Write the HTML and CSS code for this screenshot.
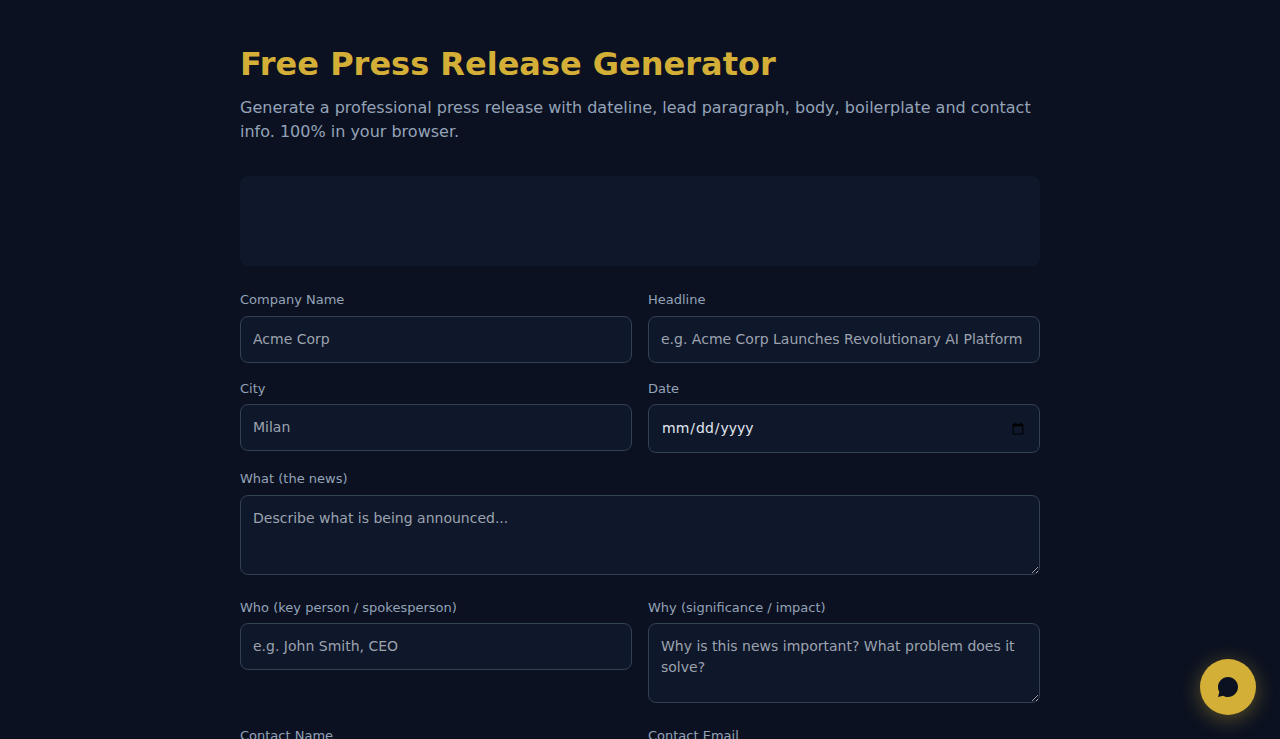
FILE: index.html
```html
<!DOCTYPE html>
<html lang="en">
<head>
<meta charset="utf-8">
<meta name="viewport" content="width=device-width, initial-scale=1">
<title>Free Press Release Generator</title>
<link rel="stylesheet" href="styles.css">
</head>
<body>
<main class="container">
  <h1 class="title">Free Press Release Generator</h1>
  <p class="subtitle">Generate a professional press release with dateline, lead paragraph, body, boilerplate and contact info. 100% in your browser.</p>
  <div class="banner"></div>
  <form class="form">
    <div class="row">
      <div class="field"><label for="company">Company Name</label><input type="text" id="company" placeholder="Acme Corp"></div>
      <div class="field"><label for="headline">Headline</label><input type="text" id="headline" placeholder="e.g. Acme Corp Launches Revolutionary AI Platform"></div>
    </div>
    <div class="row">
      <div class="field"><label for="city">City</label><input type="text" id="city" placeholder="Milan"></div>
      <div class="field"><label for="date">Date</label><input type="date" id="date"></div>
    </div>
    <div class="field"><label for="what">What (the news)</label><textarea id="what" placeholder="Describe what is being announced..."></textarea></div>
    <div class="row">
      <div class="field"><label for="who">Who (key person / spokesperson)</label><input type="text" id="who" placeholder="e.g. John Smith, CEO"></div>
      <div class="field"><label for="why">Why (significance / impact)</label><textarea id="why" placeholder="Why is this news important? What problem does it solve?"></textarea></div>
    </div>
    <div class="row">
      <div class="field"><label for="contact">Contact Name</label><input type="text" id="contact"></div>
      <div class="field"><label for="email">Contact Email</label><input type="email" id="email"></div>
    </div>
  </form>
</main>
<button class="chat" type="button" aria-label="Open chat">
  <svg viewBox="0 0 24 24" width="24" height="24" aria-hidden="true"><path fill="currentColor" d="M12 2C6.480 2 2 6.480 2 12c0 1.820.490 3.530 1.340 5L2 22l5-1.340C8.470 21.510 10.180 22 12 22c5.520 0 10-4.480 10-10S17.520 2 12 2z"/></svg>
</button>
</body>
</html>
```
FILE: styles.css
```css
* { box-sizing: border-box; margin: 0; padding: 0; }
body {
  background: #0b1120;
  color: #e2e8f0;
  font-family: "DejaVu Sans", sans-serif;
  line-height: 1.5;
}
.container { max-width: 848px; margin: 0 auto; padding: 40px 24px; }
.title { color: #d4af37; font-size: 32px; margin-bottom: 8px; }
.subtitle { color: #94a3b8; font-size: 16px; margin-bottom: 32px; }
.banner { height: 90px; border-radius: 8px; background: #0f172a; margin-bottom: 24px; }
.row { display: grid; grid-template-columns: 1fr 1fr; gap: 16px; }
.field { display: flow-root; margin-bottom: 16px; }
label { display: block; color: #94a3b8; font-size: 13px; margin-bottom: 6px; }
input, textarea {
  display: block;
  width: 100%;
  padding: 12px;
  background: #0f172a;
  color: #e2e8f0;
  border: 1px solid #334155;
  border-radius: 8px;
  font: 14px/21px "DejaVu Sans", sans-serif;
}
::placeholder { color: #9ca3af; }
textarea { height: 80px; resize: vertical; margin-bottom: 7px; }
.chat {
  position: fixed;
  right: 24px;
  bottom: 24px;
  width: 56px;
  height: 56px;
  display: flex;
  align-items: center;
  justify-content: center;
  border: 0;
  border-radius: 50%;
  background: #d4af37;
  color: #0b1120;
  box-shadow: 0 4px 20px rgba(212, 175, 55, 0.4);
  cursor: pointer;
}
```
